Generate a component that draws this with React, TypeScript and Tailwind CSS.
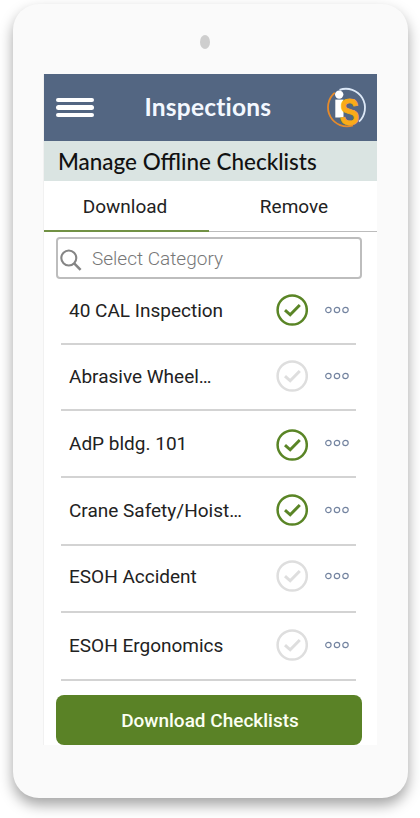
import { useState } from 'react'
import clsx from 'clsx'

type Tab = 'download' | 'remove'

type Checklist = {
  name: string
  selected: boolean
  row: string
  label: string
  check: string
  more: string
}

const CHECKLISTS: Checklist[] = [
  { name: '40 CAL Inspection', selected: true, row: 'h-[66px]', label: 'mb-0', check: 'mb-[3px]', more: 'mb-[2px]' },
  { name: 'Abrasive Wheel…', selected: false, row: 'h-[66px]', label: 'mb-0', check: 'mb-[3px]', more: 'mb-[2px]' },
  { name: 'AdP bldg. 101', selected: true, row: 'h-[67px]', label: 'mt-[2px]', check: 'mt-[2px]', more: 'mb-[2px]' },
  { name: 'Crane Safety/Hoist…', selected: true, row: 'h-[68px]', label: 'mb-0', check: 'mb-[3px]', more: 'mb-[2px]' },
  { name: 'ESOH Accident', selected: false, row: 'h-[67px]', label: 'mb-[2px]', check: 'mb-[5px]', more: 'mb-[5px]' },
  { name: 'ESOH Ergonomics', selected: false, row: 'h-[68px]', label: 'mb-0', check: 'mb-[2px]', more: 'mb-[2px]' },
]

function Logo() {
  return (
    <svg width="42" height="52" viewBox="0 -5 42 52" fill="none">
      <path d="M14.5 2.9A19 19 0 0 1 34 34.6" stroke="#dce8f7" strokeWidth="1.8" />
      <path d="M9.8 5.8A19 19 0 0 0 28 38.4" stroke="#e58a2a" strokeWidth="1.8" />
      <circle cx="14.2" cy="7.6" r="4.2" fill="white" />
      <path d="M10.3 12.6H18.5V30.5H10.3Z" fill="white" />
      <text
        x="14.8"
        y="37.6"
        fontFamily="Liberation Sans, sans-serif"
        fontWeight="700"
        fontSize="36"
        textLength="19.5"
        lengthAdjust="spacingAndGlyphs"
        fill="#fbab18"
        stroke="#fbab18"
        strokeWidth="0.8"
      >
        S
      </text>
    </svg>
  )
}

function CheckIcon({ selected }: { selected: boolean }) {
  return (
    <svg
      width="32"
      height="32"
      viewBox="0 0 32 32"
      fill="none"
      className={clsx('block', selected ? 'text-[#5a8526]' : 'text-[#dedede]')}
      stroke="currentColor"
    >
      <circle cx="16.2" cy="16" r="14.6" strokeWidth="2.5" />
      <path d="M9 16.2L14.2 20.8L23.8 11" strokeWidth="3" />
    </svg>
  )
}

function MoreIcon() {
  return (
    <svg width="24" height="8" viewBox="0 0 24 8" fill="none" stroke="#7484a0" strokeWidth="1.2" className="block">
      <circle cx="3.4" cy="4" r="2.7" />
      <circle cx="12" cy="4" r="2.7" />
      <circle cx="20.5" cy="4" r="2.7" />
    </svg>
  )
}

export default function App() {
  const [activeTab, setActiveTab] = useState<Tab>('download')
  const [items, setItems] = useState(CHECKLISTS)

  const toggle = (name: string) => {
    setItems(prev => prev.map(item => item.name === name ? { ...item, selected: !item.selected } : item))
  }

  return (
    <div className="h-[818px] w-[420px] overflow-hidden bg-white pt-[4px] pl-[13px] font-['Roboto',sans-serif] text-[#222]">
      <div className="flex h-[794px] w-[395px] flex-col rounded-[26px] bg-[#fafafa] pl-[31px] shadow-[0_7px_14px_rgba(0,0,0,0.36)]">
        <div className="ml-[156px] mt-[31px] h-[14px] w-[10px] shrink-0 rounded-[50%] bg-[#cecece]" />

        <div className="mt-[25px] flex h-[671px] w-[333px] flex-col bg-white shadow-[-1px_0_0_#f1f1f1]">
          {/* HEADER */}
          <header className="flex h-[67px] shrink-0 items-center bg-[#536682] pl-[12px]">
            <button className="flex w-[38px] flex-col gap-[3px]" aria-label="Menu">
              <span className="h-[4.5px] w-full rounded-full bg-white" />
              <span className="h-[4.5px] w-full rounded-full bg-white" />
              <span className="h-[4.5px] w-full rounded-full bg-white" />
            </button>
            <h1 className="ml-[50.5px] w-[180.5px] whitespace-nowrap font-['Lato',sans-serif] text-[24.5px] font-bold tracking-[0.2px] text-[#f3f8ff]">
              Inspections
            </h1>
            <Logo />
          </header>

          <h2 className="flex h-[40px] shrink-0 items-center whitespace-nowrap bg-[#dae4e2] pl-[14px] pt-[2px] font-['Lato',sans-serif] text-[22.45px] font-medium text-[#111]">
            Manage Offline Checklists
          </h2>

          {/* TABS */}
          <div className="flex h-[51px] shrink-0">
            {(['download', 'remove'] as Tab[]).map(tab => (
              <button
                key={tab}
                onClick={() => setActiveTab(tab)}
                className={clsx(
                  'h-[51px] text-[19px]',
                  tab === 'download' ? 'w-[165px] pt-[3px] pr-[3px]' : 'w-[168px] pt-[2px] pl-[2px]',
                  activeTab === tab ? 'border-b-2 border-[#719144]' : 'border-b border-[#bcbcbc]',
                )}
              >
                {tab === 'download' ? 'Download' : 'Remove'}
              </button>
            ))}
          </div>

          <div className="ml-[12px] mt-[5px] flex h-[42px] w-[306px] shrink-0 items-center rounded-[4px] border-2 border-[#bdbdbd] pl-[2px]">
            <svg width="22" height="22" viewBox="0 0 22 22" fill="none" stroke="#858585" className="mt-[4px]">
              <circle cx="8.8" cy="9" r="7.5" strokeWidth="2.1" />
              <path d="M14.2 14.4L20.6 20.8" strokeWidth="2.6" />
            </svg>
            <input
              className="ml-[10px] mt-[3px] w-[240px] text-[19px] font-light outline-none placeholder:text-[#777]"
              placeholder="Select Category"
            />
          </div>

          {/* CHECKLISTS */}
          <ul className="ml-[17px] w-[295px]">
            {items.map(item => (
              <li key={item.name} className={clsx('flex items-center border-b-2 border-[#d3d3d3] pl-[8px]', item.row)}>
                <span className={clsx('w-[207px] whitespace-nowrap text-[19px]', item.label)}>{item.name}</span>
                <button className={item.check} onClick={() => toggle(item.name)} aria-label={item.name}>
                  <CheckIcon selected={item.selected} />
                </button>
                <button className={clsx('ml-[17px]', item.more)} aria-label="More">
                  <MoreIcon />
                </button>
              </li>
            ))}
          </ul>

          <button className="ml-[12px] mt-[14px] h-[50px] w-[306px] shrink-0 rounded-[8px] bg-[#5a8226] pt-[3px] pl-[2px] text-[19px] font-medium text-[#fbfff2]">
            Download Checklists
          </button>
        </div>
      </div>
    </div>
  )
}
